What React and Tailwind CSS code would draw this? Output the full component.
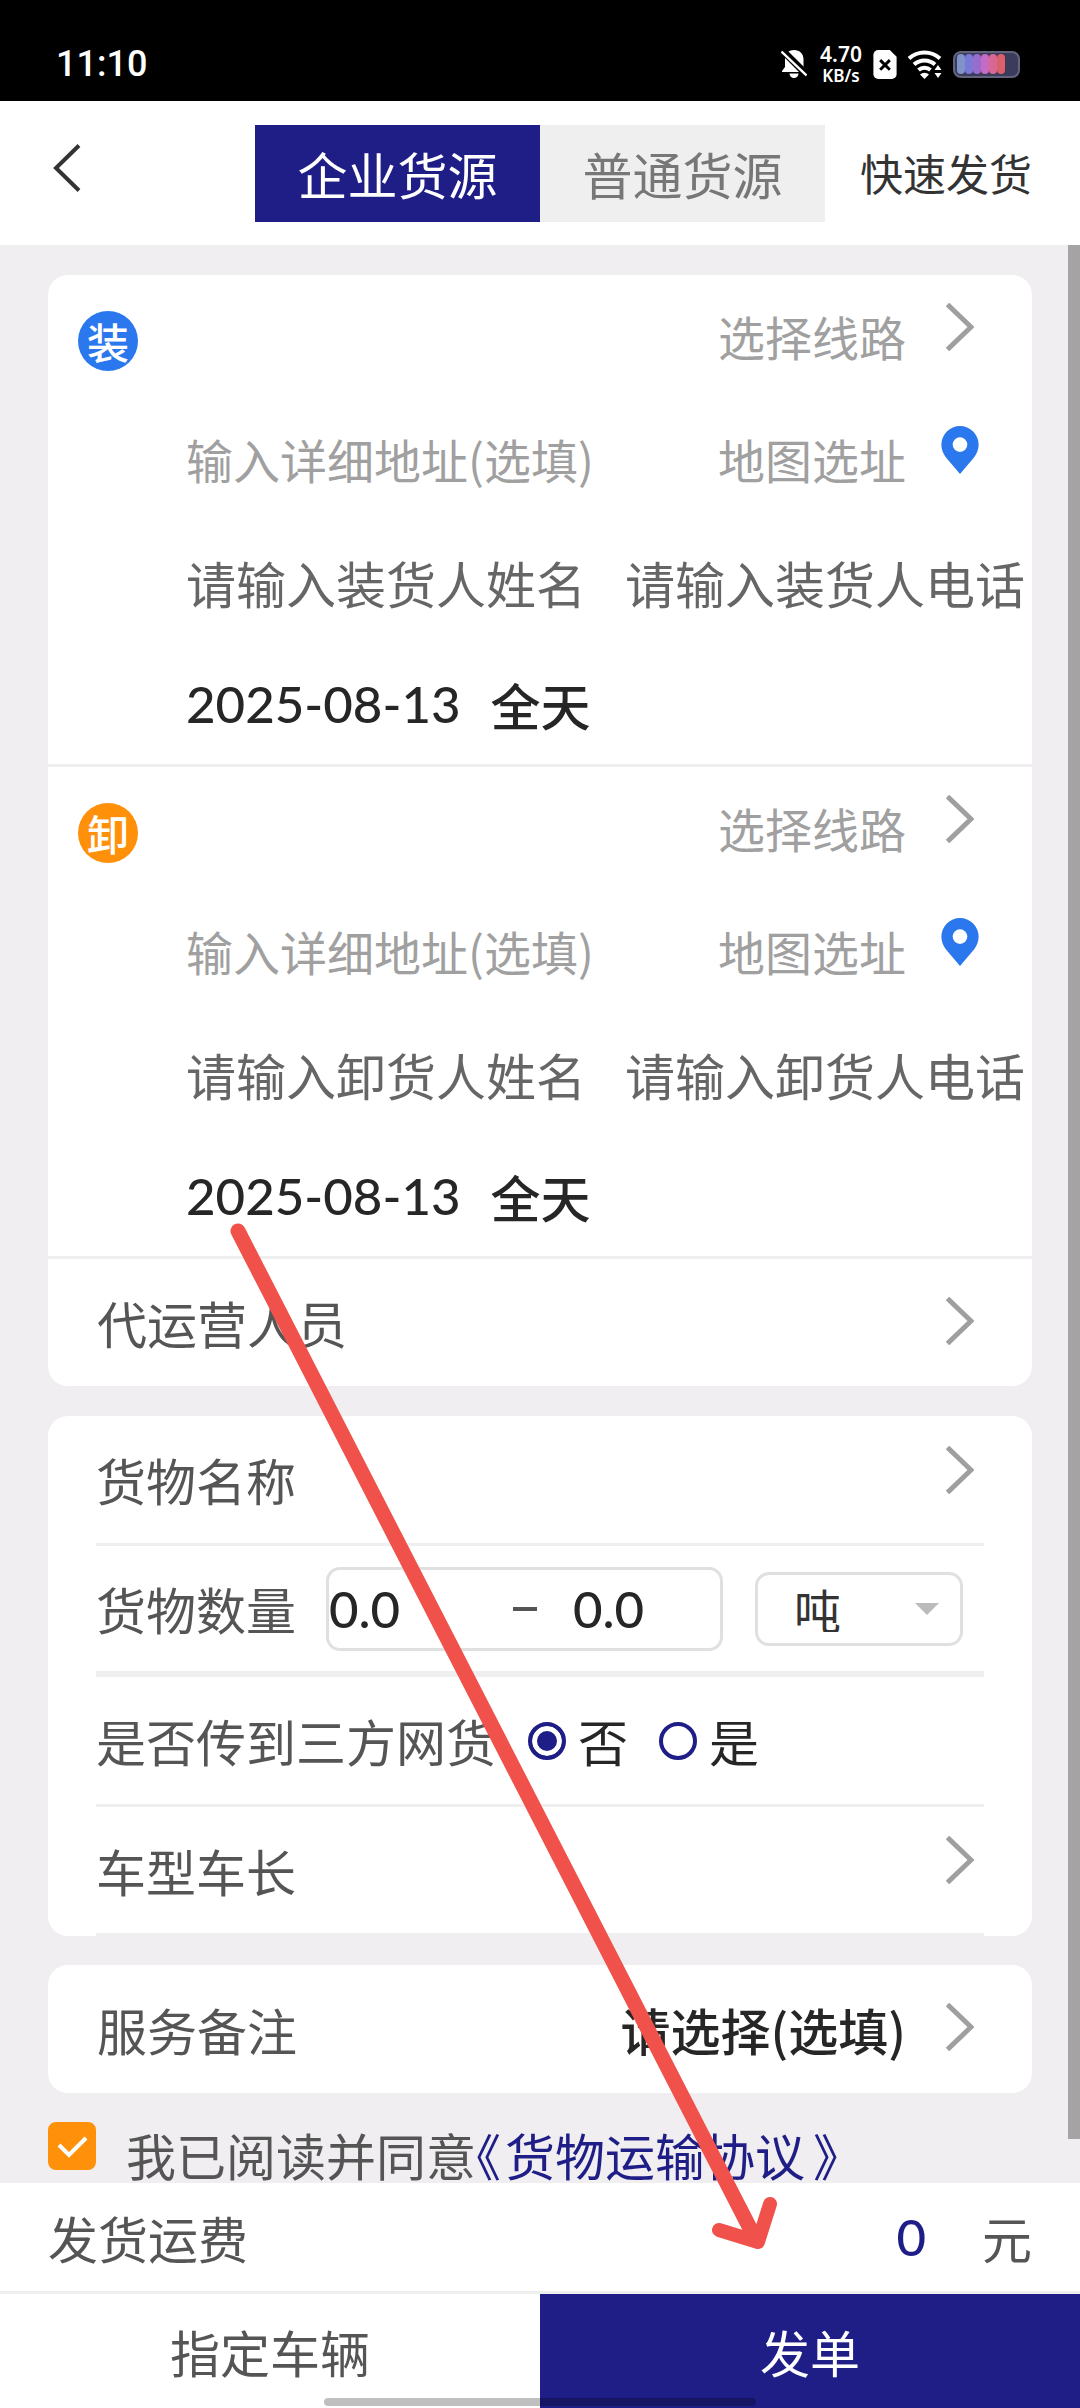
import { useState } from 'react'

const DATE = '2025-08-13'

function Chevron({ className = '' }) {
  return (
    <svg viewBox="0 0 28 48" className={`h-12 w-7 shrink-0 ${className}`} fill="none" stroke="#9f9f9f" strokeWidth="5">
      <path d="M1.5 1.5 25 24 1.5 46.5" />
    </svg>
  )
}

function Pin() {
  return (
    <svg viewBox="0 0 38 49" className="h-12 w-[38px] shrink-0">
      <path fill="#2b78ee" fillRule="evenodd" d="M19 0a19 19 0 0 1 19 19c0 5-1.600 9-4.500 13L19 49 4.500 32C1.600 28 0 24 0 19A19 19 0 0 1 19 0Zm0 11.500a7.500 7.500 0 1 0 0 15 7.500 7.500 0 0 0 0-15Z" />
    </svg>
  )
}

function StatusBar() {
  const bars = ['#7f93c8', '#7b78d8', '#9a6cd0', '#c46bc4', '#d8688f', '#dc5f6c']
  return (
    <div className="flex h-[101px] items-end justify-between bg-black pb-3 pl-14 pr-14 text-white">
      <span className="flex h-[50px] items-center font-['Roboto',sans-serif] text-[36px] font-medium leading-none">11:10</span>
      <div className="flex h-[50px] items-center">
        <svg viewBox="0 0 26 30" className="h-[30px] w-[26px]">
          <path fill="#fff" d="M13 1c6 0 9.500 4 9.500 9v8l2.500 4v1H1v-1l3-4v-8C4 5 7 1 13 1ZM8.500 24.500h9a4.500 4.500 0 0 1-9 0Z" />
          <path stroke="#000" strokeWidth="7" d="M2 2l24 24" />
          <path stroke="#fff" strokeWidth="2.400" d="M.5 2.500l25 24" />
        </svg>
        <div className="ml-2.5 flex w-[48px] flex-col items-center font-['Noto_Sans',sans-serif] font-semibold">
          <span className="text-[21px] leading-[24px]">4.70</span>
          <span className="text-[17px] leading-[20px]">KB/s</span>
        </div>
        <svg viewBox="0 0 24 30" className="ml-2 h-[29px] w-6">
          <path fill="#fff" d="M5 0h12l7 7v18a5 5 0 0 1-5 5H5a5 5 0 0 1-5-5V5a5 5 0 0 1 5-5Z" />
          <path stroke="#000" strokeWidth="3" d="M7 10.500l10 10M17 10.500l-10 10" />
        </svg>
        <svg viewBox="0 0 36 30" className="ml-2.5 h-[30px] w-9" fill="none" stroke="#fff" strokeWidth="4">
          <path d="M2 9.500a23 23 0 0 1 31 0" />
          <path d="M7 15.500a15.500 15.500 0 0 1 21 0" />
          <path d="M11.500 21a9 9 0 0 1 12 0" />
          <path fill="#fff" stroke="none" d="M13 25.500a7 7 0 0 1 9 0L17.500 30ZM31 16l3.500 5h-7ZM31 29l3.500-5h-7Z" />
        </svg>
        <div className="ml-2.5 mr-1 flex h-[27px] w-[67px] items-center rounded-lg border-2 border-[#62637c] bg-[#3b3c5c] px-0.5">
          {bars.map((c) => (
            <span key={c} className="h-5 w-2 rounded-full" style={{ backgroundColor: c }} />
          ))}
        </div>
      </div>
    </div>
  )
}

function Header({ tab, setTab }) {
  return (
    <header className="grid h-36 grid-cols-[1fr_570px_1fr] items-center bg-white">
      <button aria-label="返回" className="ml-[53px] w-fit pb-2.5">
        <svg viewBox="0 0 28 48" className="h-12 w-7" fill="none" stroke="#333" strokeWidth="4">
          <path d="M26 1.500 3 24l23 22.500" />
        </svg>
      </button>
      <div className="grid grid-cols-2 text-[50px] leading-[97px]">
        {['企业货源', '普通货源'].map((name, i) => (
          <button key={name} onClick={() => setTab(i)} className={tab === i ? 'bg-[#1f1e87] text-white' : 'bg-[#efefef] text-[#777]'}>
            {name}
          </button>
        ))}
      </div>
      <button className="justify-self-end pr-12 text-[43px] text-[#333]">快速发货</button>
    </header>
  )
}

function Stop({ badge, color }) {
  return (
    <section className="border-b-[3px] border-[#efefef]">
      <div className="flex h-[123px] items-center justify-between pl-[30px] pr-[58px]">
        <span className={`mt-2 flex size-[60px] items-center justify-center rounded-full text-[42px] font-medium leading-none text-white ${color}`}>
          {badge}
        </span>
        <button className="flex items-center gap-10 text-[47px] text-[#a0a0a0]">
          选择线路
          <span className="pb-5"><Chevron /></span>
        </button>
      </div>
      <div className="flex h-[123px] items-center pl-[138px] pr-[53px] text-[47px] text-[#a0a0a0]">
        <input aria-label="详细地址" placeholder="输入详细地址(选填)" className="min-w-0 flex-1 outline-none placeholder:text-[#a0a0a0]" />
        <button className="flex items-center gap-[35px]">
          地图选址
          <span className="pb-5"><Pin /></span>
        </button>
      </div>
      <div className="flex h-[123px] items-center gap-[39px] pl-[138px] text-[50px]">
        <input aria-label="姓名" placeholder={`请输入${badge}货人姓名`} className="w-[400px] outline-none placeholder:text-[#666]" />
        <input aria-label="电话" placeholder={`请输入${badge}货人电话`} className="min-w-0 flex-1 outline-none placeholder:text-[#666]" />
      </div>
      <button className="flex h-[120px] items-center gap-[30px] pl-[138px] text-[50px] font-medium text-[#262626]">
        <span className="font-['Lato',sans-serif] text-[51px]">{DATE}</span>
        全天
      </button>
    </section>
  )
}

function LinkRow({ label, value, className = '', iconClass = '' }) {
  return (
    <button className={`flex w-full items-center justify-between text-left ${className}`}>
      {label}
      <span className="flex items-center gap-10 font-medium text-[#262626]">
        {value}
        <span className={iconClass}><Chevron /></span>
      </span>
    </button>
  )
}

function Radio({ label, ...props }) {
  return (
    <label className="flex items-center gap-3 text-[#262626]">
      <input
        type="radio"
        name="thirdParty"
        className="size-[38px] appearance-none rounded-full border-4 border-[#1f1e87] checked:bg-[#1f1e87] checked:shadow-[inset_0_0_0_5px_white]"
        {...props}
      />
      {label}
    </label>
  )
}

export default function App() {
  const [tab, setTab] = useState(0)
  const [third, setThird] = useState(false)
  const [agree, setAgree] = useState(true)

  return (
    <div className="relative flex min-h-screen flex-col bg-[#f0eef0] font-['Noto_Sans_CJK_SC',sans-serif] leading-tight text-[#555]">
      <StatusBar />
      <Header tab={tab} setTab={setTab} />

      <main className="relative flex-1 px-12 pt-[30px] text-[50px]">
        <div className="rounded-[20px] bg-white">
          <Stop badge="装" color="bg-[#2b78ee]" />
          <Stop badge="卸" color="bg-[#ff910a]" />
          <LinkRow label="代运营人员" className="h-[127px] pl-[49px] pr-[58px]" iconClass="pb-1" />
        </div>

        <div className="mt-[30px] rounded-[20px] bg-white px-12">
          <LinkRow label="货物名称" className="h-[130px] border-b-[3px] border-[#efefef] pr-2.5" iconClass="pb-5" />
          <div className="flex h-[131px] items-center border-b-[6px] border-[#efefef]">
            <span>货物数量</span>
            <div className="ml-[30px] flex h-[84px] w-[397px] items-center rounded-[14px] border-[3px] border-[#e0e0e0] font-['Lato',sans-serif] text-[51px] font-medium">
              <input aria-label="最小数量" defaultValue="0.0" className="w-[184px] text-[#262626] outline-none" />
              <span className="h-1 w-6 bg-[#555]" />
              <input aria-label="最大数量" defaultValue="0.0" className="ml-9 w-[120px] text-[#262626] outline-none" />
            </div>
            <div className="relative ml-8">
              <select aria-label="单位" className="block h-[74px] w-[208px] appearance-none rounded-[14px] border-[3px] border-[#e0e0e0] pl-9 text-[47px] leading-none text-[#333]">
                <option>吨</option>
                <option>方</option>
              </select>
              <svg viewBox="0 0 24 12" className="pointer-events-none absolute right-6 top-[31px] h-3 w-6">
                <path fill="#bbb" d="M0 0h24L12 12Z" />
              </svg>
            </div>
          </div>
          <div className="flex h-[130px] items-center border-b-[3px] border-[#efefef]">
            <span className="mr-8">是否传到三方网货</span>
            <div className="flex gap-[31px]">
              <Radio label="否" checked={!third} onChange={() => setThird(false)} />
              <Radio label="是" checked={third} onChange={() => setThird(true)} />
            </div>
          </div>
          <LinkRow label="车型车长" className="h-[129px] border-b-[3px] border-[#f0eef0] pr-2.5" iconClass="pb-5" />
        </div>

        <div className="mt-[29px] rounded-[20px] bg-white">
          <LinkRow label="服务备注" value="请选择(选填)" className="h-32 pl-[49px] pr-[58px]" iconClass="pb-1" />
        </div>

        <div className="flex h-[90px] items-start">
          <span className="relative mt-[29px] size-12">
            <input
              id="agree"
              type="checkbox"
              checked={agree}
              onChange={(e) => setAgree(e.target.checked)}
              className="block size-12 appearance-none rounded-lg border-2 border-[#ff910a] bg-white checked:bg-[#ff910a]"
            />
            <svg viewBox="0 0 48 48" className="pointer-events-none absolute inset-0" fill="none" stroke="#fff" strokeWidth="4">
              <path d="M11 23l10 10 17-17" />
            </svg>
          </span>
          <div className="ml-[30px] mt-[30px]">
            <label htmlFor="agree">我已阅读并同意</label>
            <a href="#agreement" className="text-[#1f1e87]">
              <span className="mr-1 [font-feature-settings:'halt']">《</span>
              货物运输协议
              <span className="ml-2 [font-feature-settings:'halt']">》</span>
            </a>
          </div>
        </div>

        {/* scrollbar thumb */}
        <div className="absolute right-0 top-0 bottom-11 w-3 bg-[#a5a3a4]" />
      </main>

      <footer className="relative bg-white text-[50px]">
        <div className="flex h-[111px] items-center justify-between border-b-[3px] border-[#efefef] px-12">
          <span>发货运费</span>
          <span className="flex items-center gap-14">
            <span className="font-['Lato',sans-serif] text-[51px] font-medium text-[#1f1e87]">0</span>
            元
          </span>
        </div>
        <div className="grid h-[114px] grid-cols-2">
          <button>指定车辆</button>
          <button className="bg-[#1f1e87] text-white">发单</button>
        </div>
        <div className="absolute bottom-0.5 left-[30%] right-[30%] h-2 rounded-full bg-black/25" />
      </footer>

      {/* pointer from the date to the submit button */}
      <svg viewBox="0 0 1080 2408" className="pointer-events-none absolute inset-0 h-full w-full" fill="none" stroke="#f0524b" strokeLinecap="round" strokeLinejoin="round">
        <path strokeWidth="15" d="M238 1231 755 2238" />
        <path strokeWidth="14" d="M719 2230 758 2242 770 2204" />
      </svg>
    </div>
  )
}
